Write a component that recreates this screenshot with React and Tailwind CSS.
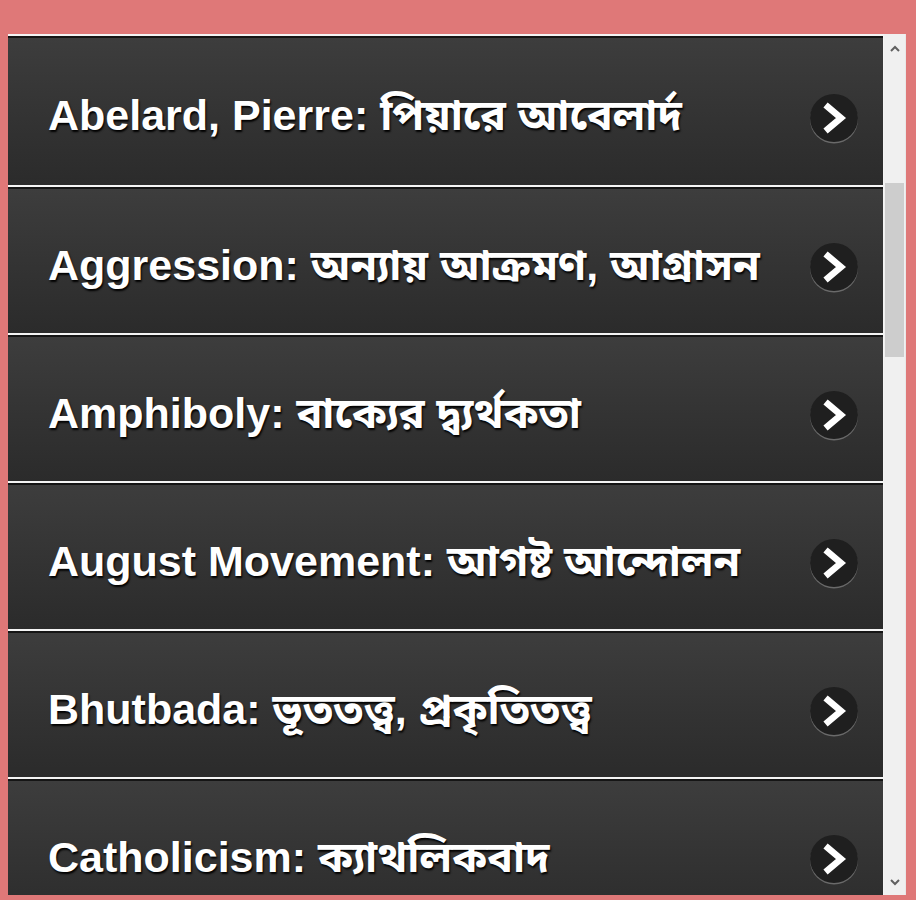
import React from 'react';

const entries = [
    { en: 'Abelard, Pierre:', bn: 'পিয়ারে আবেলার্দ' },
    { en: 'Aggression:', bn: 'অন্যায় আক্রমণ, আগ্রাসন' },
    { en: 'Amphiboly:', bn: 'বাক্যের দ্ব্যর্থকতা' },
    { en: 'August Movement:', bn: 'আগষ্ট আন্দোলন' },
    { en: 'Bhutbada:', bn: 'ভূততত্ত্ব, প্রকৃতিতত্ত্ব' },
    { en: 'Catholicism:', bn: 'ক্যাথলিকবাদ' },
];

const ArrowIcon = () => (
    <svg width="52" height="52" viewBox="0 0 52 52" className="shrink-0 mt-[12px]">
        <circle cx="26" cy="27.5" r="24" fill="#6a6a6a" />
        <circle cx="26" cy="26" r="24" fill="#1f1f1f" />
        <polyline points="20,15 33,26 20,37" fill="none" stroke="#ffffff" strokeWidth="6.5" strokeLinecap="square" strokeLinejoin="miter" />
    </svg>
);

const Row = ({ item, first }) => (
    <div className={`mt-[2px] border-t-2 border-[#151515] bg-gradient-to-b from-[#3d3d3d] to-[#2b2b2b] flex items-center justify-between pl-[40px] pr-[23px] cursor-pointer ${first ? 'h-[149px]' : 'h-[146px]'}`}>
        <span
            className="text-white font-bold text-[43px] leading-none pt-[8px] [text-shadow:1px_2px_2px_#000]"
            style={{ fontFamily: '"Liberation Sans", Arial, "Noto Sans Bengali", "Lohit Bengali", "Noto Sans", sans-serif' }}
        >
            {item.en} {item.bn}
        </span>
        <ArrowIcon />
    </div>
);

export default function App() {
    return (
        <div className="h-[900px] bg-[#df7878] pt-[34px] pl-[8px] pr-[10px] overflow-hidden">
            <div className="flex h-[861px] bg-[#f4f4f4] border-r border-[#e8e8e8]">
                <div className="flex-1 overflow-hidden">
                    {entries.map((item, i) => (
                        <Row key={i} item={item} first={i === 0} />
                    ))}
                </div>
                <div className="w-[21px] ml-[1px] bg-[#f0f0f0] flex flex-col items-center">
                    <div className="h-[21px] mt-[4px] flex items-center justify-center">
                        <svg width="10" height="7" viewBox="0 0 10 7">
                            <polyline points="1,6 5,2 9,6" fill="none" stroke="#606060" strokeWidth="2" />
                        </svg>
                    </div>
                    <div className="w-[19px] h-[174px] mt-[124px] bg-[#cdcdcd]" />
                    <div className="flex-1" />
                    <div className="h-[21px] mb-[2px] flex items-center justify-center">
                        <svg width="10" height="7" viewBox="0 0 10 7">
                            <polyline points="1,1 5,5 9,1" fill="none" stroke="#606060" strokeWidth="2" />
                        </svg>
                    </div>
                </div>
            </div>
        </div>
    );
}
